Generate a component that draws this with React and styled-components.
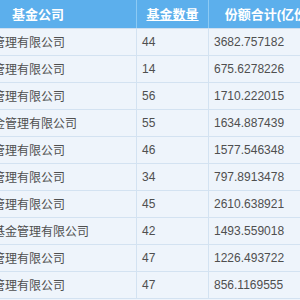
import React from "react";
import { styled, createGlobalStyle } from "styled-components";

const GlobalStyle = createGlobalStyle`
  html, body {
    margin: 0;
    padding: 0;
    background: #ffffff;
  }
`;

const Frame = styled.div`
  width: 300px;
  height: 300px;
  overflow: hidden;
  background: #eef4fb;
`;

const Table = styled.table`
  margin-left: -61px;
  width: 385px;
  table-layout: fixed;
  border-collapse: collapse;
  font-family: "Liberation Sans", "Noto Sans CJK SC", sans-serif;
`;

const HeadRow = styled.tr`
  height: 28px;
  background: #5cafec;
`;

const HeadCell = styled.th`
  width: ${(props) => props.w}px;
  padding: 0;
  color: #ffffff;
  font-size: 13px;
  font-weight: bold;
  text-align: center;
  white-space: nowrap;
  overflow: hidden;
  border-left: 1px solid #8ccaf4;
  border-bottom: 1px solid #cfdff0;
  text-decoration: ${(props) => (props.link ? "underline" : "none")};
`;

const Row = styled.tr`
  height: 27px;
  background: #eef4fb;
`;

const Cell = styled.td`
  padding: 0 5px;
  color: #4f4f4f;
  font-size: 12px;
  white-space: nowrap;
  overflow: hidden;
  border-left: 1px solid #d3e2f1;
  border-bottom: 1px solid #d3e2f1;
`;

const rows = [
  ["华夏基金管理有限公司", 44, "3682.757182"],
  ["南方基金管理有限公司", 14, "675.6278226"],
  ["博时基金管理有限公司", 56, "1710.222015"],
  ["易方达基金管理有限公司", 55, "1634.887439"],
  ["嘉实基金管理有限公司", 46, "1577.546348"],
  ["广发基金管理有限公司", 34, "797.8913478"],
  ["富国基金管理有限公司", 45, "2610.638921"],
  ["工银瑞信基金管理有限公司", 42, "1493.559018"],
  ["鹏华基金管理有限公司", 47, "1226.493722"],
  ["银华基金管理有限公司", 47, "856.1169555"],
];

const App = () => {
  return (
    <Frame>
      <GlobalStyle />
      <Table>
        <thead>
          <HeadRow>
            <HeadCell w={196}>基金公司</HeadCell>
            <HeadCell w={71} link>
              基金数量
            </HeadCell>
            <HeadCell w={118}>份额合计(亿份)</HeadCell>
          </HeadRow>
        </thead>
        <tbody>
          {rows.map((row) => (
            <Row key={row[0]}>
              <Cell>{row[0]}</Cell>
              <Cell>{row[1]}</Cell>
              <Cell>{row[2]}</Cell>
            </Row>
          ))}
        </tbody>
      </Table>
    </Frame>
  );
};

export default App;
